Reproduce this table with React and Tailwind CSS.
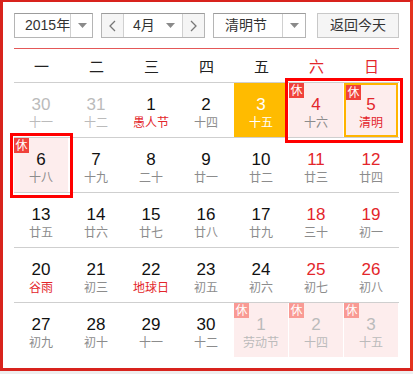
import React from 'react';

const FONT = { fontFamily: '"Liberation Sans", Arial, "Noto Sans CJK SC", sans-serif' };

const Caret = () => (
  <svg width="9" height="5" viewBox="0 0 9 5">
    <polygon points="0,0 9,0 4.5,5" fill="#8a8a8a" />
  </svg>
);

const Chevron = ({ dir }) => (
  <svg width="7" height="12" viewBox="0 0 7 12">
    <polyline
      points={dir === 'left' ? '6,1 1,6 6,11' : '1,1 6,6 1,11'}
      fill="none"
      stroke="#777"
      strokeWidth="1.3"
    />
  </svg>
);

const weekdays = ['一', '二', '三', '四', '五', '六', '日'];

// kind: prev | next | today
const rows = [
  [
    { d: 30, l: '十一', kind: 'prev' },
    { d: 31, l: '十二', kind: 'prev' },
    { d: 1, l: '愚人节', fest: true },
    { d: 2, l: '十四' },
    { d: 3, l: '十五', kind: 'today' },
    { d: 4, l: '十六', rest: true, box: 2 },
    { d: 5, l: '清明', rest: true, fest: true, selected: true },
  ],
  [
    { d: 6, l: '十八', rest: true, box: 1 },
    { d: 7, l: '十九' },
    { d: 8, l: '二十' },
    { d: 9, l: '廿一' },
    { d: 10, l: '廿二' },
    { d: 11, l: '廿三' },
    { d: 12, l: '廿四' },
  ],
  [
    { d: 13, l: '廿五' },
    { d: 14, l: '廿六' },
    { d: 15, l: '廿七' },
    { d: 16, l: '廿八' },
    { d: 17, l: '廿九' },
    { d: 18, l: '三十' },
    { d: 19, l: '初一' },
  ],
  [
    { d: 20, l: '谷雨', fest: true },
    { d: 21, l: '初三' },
    { d: 22, l: '地球日', fest: true },
    { d: 23, l: '初五' },
    { d: 24, l: '初六' },
    { d: 25, l: '初七' },
    { d: 26, l: '初八' },
  ],
  [
    { d: 27, l: '初九' },
    { d: 28, l: '初十' },
    { d: 29, l: '十一' },
    { d: 30, l: '十二' },
    { d: 1, l: '劳动节', kind: 'next', rest: true },
    { d: 2, l: '十四', kind: 'next', rest: true },
    { d: 3, l: '十五', kind: 'next', rest: true },
  ],
];

const DayCell = ({ cell, col }) => {
  const weekend = col >= 5;
  const faded = cell.kind === 'prev' || cell.kind === 'next';
  const today = cell.kind === 'today';

  let bg = '';
  if (today) bg = 'bg-[#ffbb00]';
  else if (cell.rest) bg = 'bg-[#fdeded]';

  let numColor = 'text-[#111]';
  if (faded) numColor = 'text-[#bbbbbb]';
  else if (today) numColor = 'text-white';
  else if (weekend) numColor = 'text-[#e3262b]';

  let lunarColor = 'text-[#8c8c8c]';
  if (faded) lunarColor = 'text-[#bbbbbb]';
  else if (today) lunarColor = 'text-white';
  else if (cell.fest) lunarColor = 'text-[#e3262b]';

  return (
    <div className="relative h-[54px] w-[55px]">
      <div
        className={`relative flex h-full w-[54px] flex-col items-center ${bg} ${
          cell.selected ? 'border-2 border-[#ffb400] pt-[10px]' : 'pt-[12px]'
        }`}
      >
        {cell.rest && (
          <span
            className={`absolute left-0 top-0 flex h-[15px] w-[15px] items-center justify-center text-[12px] leading-none text-white ${
              faded ? 'bg-[#f99a94]' : 'bg-[#f0413b]'
            }`}
          >
            休
          </span>
        )}
        <span className={`text-[17px] leading-[20px] ${numColor}`}>{cell.d}</span>
        <span className={`text-[12px] leading-[16px] ${lunarColor}`}>{cell.l}</span>
      </div>
      {cell.box && (
        <div
          className={`pointer-events-none absolute left-[-4px] top-[-5px] z-10 h-[65px] border-[3px] border-[#ff0000] ${
            cell.box === 2 ? 'w-[118px]' : 'w-[63px]'
          }`}
        />
      )}
    </div>
  );
};

export default function App() {
  return (
    <div className="h-[374px] w-[413px] bg-[#eeeeee]" style={FONT}>
      <div className="h-[371px] w-[413px] border-[3px] border-t-2 border-[#d8231d] border-r-[#e3331f] bg-white px-[11px] pt-[11px]">
        {/* toolbar */}
        <div className="flex h-[25px] items-stretch whitespace-nowrap text-[14px] text-[#333]">
          <div className="flex w-[79px] border border-[#b5b5b5] border-t-[#9c9c9c]">
            <div className="flex flex-1 items-center pl-[10px]">2015年</div>
            <div className="flex w-[24px] shrink-0 items-center justify-center border-l border-[#d0d0d0]">
              <Caret />
            </div>
          </div>
          <div className="ml-2 flex w-[104px] border border-[#b5b5b5] border-t-[#9c9c9c]">
            <div className="flex w-[22px] shrink-0 items-center justify-center border-r border-[#d0d0d0] bg-[#f5f5f5]">
              <Chevron dir="left" />
            </div>
            <div className="flex flex-1 items-center pl-[9px]">
              <span className="flex-1">4月</span>
              <span className="mr-[7px] flex">
                <Caret />
              </span>
            </div>
            <div className="flex w-[22px] shrink-0 items-center justify-center border-l border-[#d0d0d0] bg-[#f5f5f5]">
              <Chevron dir="right" />
            </div>
          </div>
          <div className="ml-2 flex w-[93px] border border-[#b5b5b5] border-t-[#9c9c9c]">
            <div className="flex flex-1 items-center pl-[11px]">清明节</div>
            <div className="flex w-[23px] shrink-0 items-center justify-center border-l border-[#d0d0d0]">
              <Caret />
            </div>
          </div>
          <button className="ml-auto flex w-[82px] items-center justify-center border border-[#c8c8c8] bg-[#f5f5f5] text-[14px] text-[#333]">
            返回今天
          </button>
        </div>

        <div className="mt-[10px] h-px bg-[#e45858]" />

        {/* weekday header */}
        <div className="grid h-[34px] grid-cols-[repeat(7,55px)] border-b border-[#cfcfcf]">
          {weekdays.map((w, i) => (
            <div
              key={w}
              className={`flex items-center justify-center pt-[4px] text-[15px] ${
                i >= 5 ? 'text-[#e3262b]' : 'text-[#222]'
              }`}
            >
              {w}
            </div>
          ))}
        </div>

        {/* days */}
        {rows.map((row, r) => (
          <div
            key={r}
            className={`grid grid-cols-[repeat(7,55px)] ${
              r < rows.length - 1 ? 'border-b border-[#cfcfcf]' : ''
            }`}
          >
            {row.map((cell, c) => (
              <DayCell key={c} cell={cell} col={c} />
            ))}
          </div>
        ))}
      </div>
    </div>
  );
}
